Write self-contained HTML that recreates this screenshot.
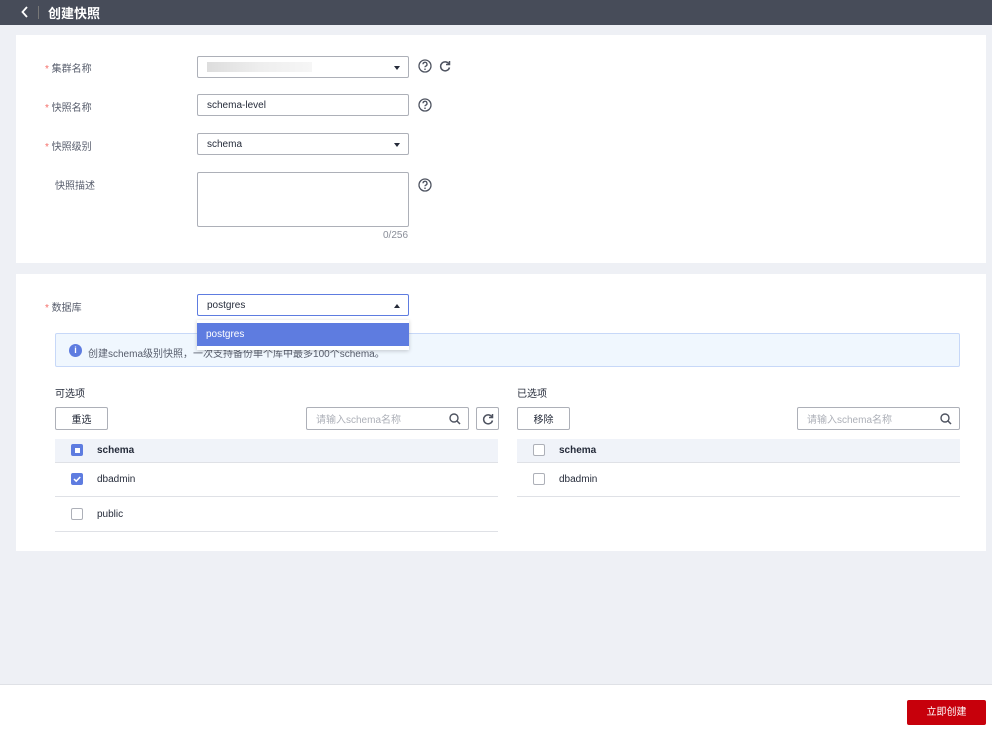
<!DOCTYPE html><html><head><meta charset="utf-8"><style>
*{box-sizing:border-box;margin:0;padding:0}
body{width:992px;height:737px;background:#eef0f5;font-family:"Liberation Sans","Noto Sans CJK SC",sans-serif;font-size:10px;color:#252b3a;position:relative;overflow:hidden}
.a{position:absolute}
.top{left:0;top:0;width:992px;height:25px;background:#474c59;color:#fff}
.card{background:#fff;left:16px;width:970px}
.lbl{font-size:10px;color:#575d6c}
.star{color:#f66f6a}
.inp{border:1px solid #adb0b8;border-radius:2px;background:#fff;height:22px;width:212px;left:197px;padding:0 9px;display:flex;align-items:center;font-size:10px}
.tri{position:absolute;right:8px;top:9px;width:0;height:0;border-left:3.5px solid transparent;border-right:3.5px solid transparent;border-top:4px solid #252b3a}
.btn{border:1px solid #adb0b8;border-radius:2px;background:#fff;height:23px;display:flex;align-items:center;justify-content:center;font-size:10px}
.cb{width:12px;height:12px;border:1px solid #adb0b8;border-radius:2px;background:#fff}
.cbon{background:#5e7ce0;border-color:#5e7ce0}
.line{height:1px;background:#dfe1e6}
</style></head><body>
<div class="a top"><svg class="a" style="left:21px;top:6px" width="8" height="12" viewBox="0 0 8 12"><path d="M6 1L1.5 6 6 11" fill="none" stroke="#fff" stroke-width="1.8"/></svg><div class="a" style="left:38px;top:6px;width:1px;height:13px;background:#777"></div><span class="a" style="left:48px;top:3px;font-size:13px;font-weight:bold">创建快照</span></div>

<div class="a card" style="top:35px;height:228px"></div>
<span class="a lbl" style="left:45px;top:60px"><span class="star">* </span>集群名称</span>
<div class="a inp" style="top:56px"><span style="display:inline-block;width:105px;height:10px;background:linear-gradient(90deg,#ddd,#eee,#f6f6f6)"></span><div class="tri"></div></div>
<svg class="a" style="left:418px;top:59px" width="14" height="14" viewBox="0 0 14 14"><circle cx="7" cy="7" r="6" fill="none" stroke="#4e5360" stroke-width="1.3"/><path d="M5 5.3a2 2 0 1 1 2.6 1.9c-.5.2-.6.5-.6 1.1" fill="none" stroke="#4e5360" stroke-width="1.3"/><circle cx="7" cy="10.2" r=".8" fill="#4e5360"/></svg>
<svg class="a" style="left:439px;top:60px" width="12" height="12" viewBox="0 0 12 12"><path d="M10 4A4.5 4.5 0 1 0 10.5 7.5" fill="none" stroke="#4e5360" stroke-width="1.5"/><path d="M10.5 1v3.5H7" fill="none" stroke="#4e5360" stroke-width="1.5"/></svg>
<span class="a lbl" style="left:45px;top:99px"><span class="star">* </span>快照名称</span>
<div class="a inp" style="top:94px">schema-level</div>
<svg class="a" style="left:418px;top:98px" width="14" height="14" viewBox="0 0 14 14"><circle cx="7" cy="7" r="6" fill="none" stroke="#4e5360" stroke-width="1.3"/><path d="M5 5.3a2 2 0 1 1 2.6 1.9c-.5.2-.6.5-.6 1.1" fill="none" stroke="#4e5360" stroke-width="1.3"/><circle cx="7" cy="10.2" r=".8" fill="#4e5360"/></svg>
<span class="a lbl" style="left:45px;top:138px"><span class="star">* </span>快照级别</span>
<div class="a inp" style="top:133px">schema<div class="tri"></div></div>
<span class="a lbl" style="left:55px;top:177px">快照描述</span>
<div class="a inp" style="top:172px;height:55px"></div>
<svg class="a" style="left:418px;top:178px" width="14" height="14" viewBox="0 0 14 14"><circle cx="7" cy="7" r="6" fill="none" stroke="#4e5360" stroke-width="1.3"/><path d="M5 5.3a2 2 0 1 1 2.6 1.9c-.5.2-.6.5-.6 1.1" fill="none" stroke="#4e5360" stroke-width="1.3"/><circle cx="7" cy="10.2" r=".8" fill="#4e5360"/></svg>
<span class="a" style="left:383px;top:230px;color:#8a8e99">0/256</span>

<div class="a card" style="top:274px;height:277px"></div>
<span class="a lbl" style="left:45px;top:299px"><span class="star">* </span>数据库</span>
<div class="a" style="left:55px;top:333px;width:905px;height:34px;background:#f0f7fe;border:1px solid #c7d8f8;border-radius:2px"></div>
<div class="a" style="left:69px;top:344px;width:13px;height:13px;border-radius:50%;background:#5e7ce0;color:#fff;font-size:9px;text-align:center;line-height:13px;font-weight:bold">i</div>
<span class="a" style="left:88px;top:345px;color:#575d6c">创建schema级别快照，一次支持备份单个库中最多100个schema。</span>
<div class="a inp" style="top:294px;border-color:#5e7ce0">postgres<div class="tri" style="border-top:none;border-bottom:4px solid #252b3a"></div></div>
<div class="a" style="left:197px;top:320px;width:212px;height:30px;background:#fff;box-shadow:0 1px 4px rgba(0,0,0,.2)"><div style="margin-top:3px;height:23px;background:#5e7ce0;color:#fff;padding-left:9px;line-height:23px">postgres</div></div>

<span class="a" style="left:55px;top:385px">可选项</span>
<div class="a btn" style="left:55px;top:407px;width:53px">重选</div>
<div class="a btn" style="left:306px;top:407px;width:163px;justify-content:flex-start;padding-left:9px;color:#adb0b8">请输入schema名称<svg class="a" style="right:7px;top:5px" width="12" height="12" viewBox="0 0 12 12"><circle cx="5" cy="5" r="4" fill="none" stroke="#4e5360" stroke-width="1.4"/><path d="M8 8l3 3" stroke="#4e5360" stroke-width="1.5"/></svg></div>
<div class="a btn" style="left:476px;top:407px;width:23px"><svg width="12" height="12" viewBox="0 0 12 12"><path d="M10 4A4.5 4.5 0 1 0 10.5 7.5" fill="none" stroke="#4e5360" stroke-width="1.5"/><path d="M10.5 1v3.5H7" fill="none" stroke="#4e5360" stroke-width="1.5"/></svg></div>
<div class="a" style="left:55px;top:439px;width:443px;height:23px;background:#f0f3f9"></div>
<div class="a cb cbon" style="left:71px;top:444px"><div style="width:5px;height:5px;background:#fff;margin:2.5px"></div></div>
<span class="a" style="left:97px;top:445px;font-weight:bold">schema</span>
<div class="a line" style="left:55px;top:462px;width:443px"></div>
<div class="a cb cbon" style="left:71px;top:473px"><svg width="10" height="10" viewBox="0 0 10 10" style="display:block"><path d="M2 5l2.2 2.2L8.2 3" fill="none" stroke="#fff" stroke-width="1.5"/></svg></div>
<span class="a" style="left:97px;top:474px">dbadmin</span>
<div class="a line" style="left:55px;top:496px;width:443px"></div>
<div class="a cb" style="left:71px;top:508px"></div>
<span class="a" style="left:97px;top:509px">public</span>
<div class="a line" style="left:55px;top:531px;width:443px"></div>

<span class="a" style="left:517px;top:385px">已选项</span>
<div class="a btn" style="left:517px;top:407px;width:53px">移除</div>
<div class="a btn" style="left:797px;top:407px;width:163px;justify-content:flex-start;padding-left:9px;color:#adb0b8">请输入schema名称<svg class="a" style="right:7px;top:5px" width="12" height="12" viewBox="0 0 12 12"><circle cx="5" cy="5" r="4" fill="none" stroke="#4e5360" stroke-width="1.4"/><path d="M8 8l3 3" stroke="#4e5360" stroke-width="1.5"/></svg></div>
<div class="a" style="left:517px;top:439px;width:443px;height:23px;background:#f0f3f9"></div>
<div class="a cb" style="left:533px;top:444px"></div>
<span class="a" style="left:559px;top:445px;font-weight:bold">schema</span>
<div class="a line" style="left:517px;top:462px;width:443px"></div>
<div class="a cb" style="left:533px;top:473px"></div>
<span class="a" style="left:559px;top:474px">dbadmin</span>
<div class="a line" style="left:517px;top:496px;width:443px"></div>

<div class="a" style="left:0;top:684px;width:992px;height:53px;background:#fff;border-top:1px solid #dfe1e6"></div>
<div class="a" style="left:907px;top:700px;width:79px;height:25px;background:#c7000b;color:#fff;text-align:center;line-height:25px;border-radius:2px">立即创建</div>
</body></html>
